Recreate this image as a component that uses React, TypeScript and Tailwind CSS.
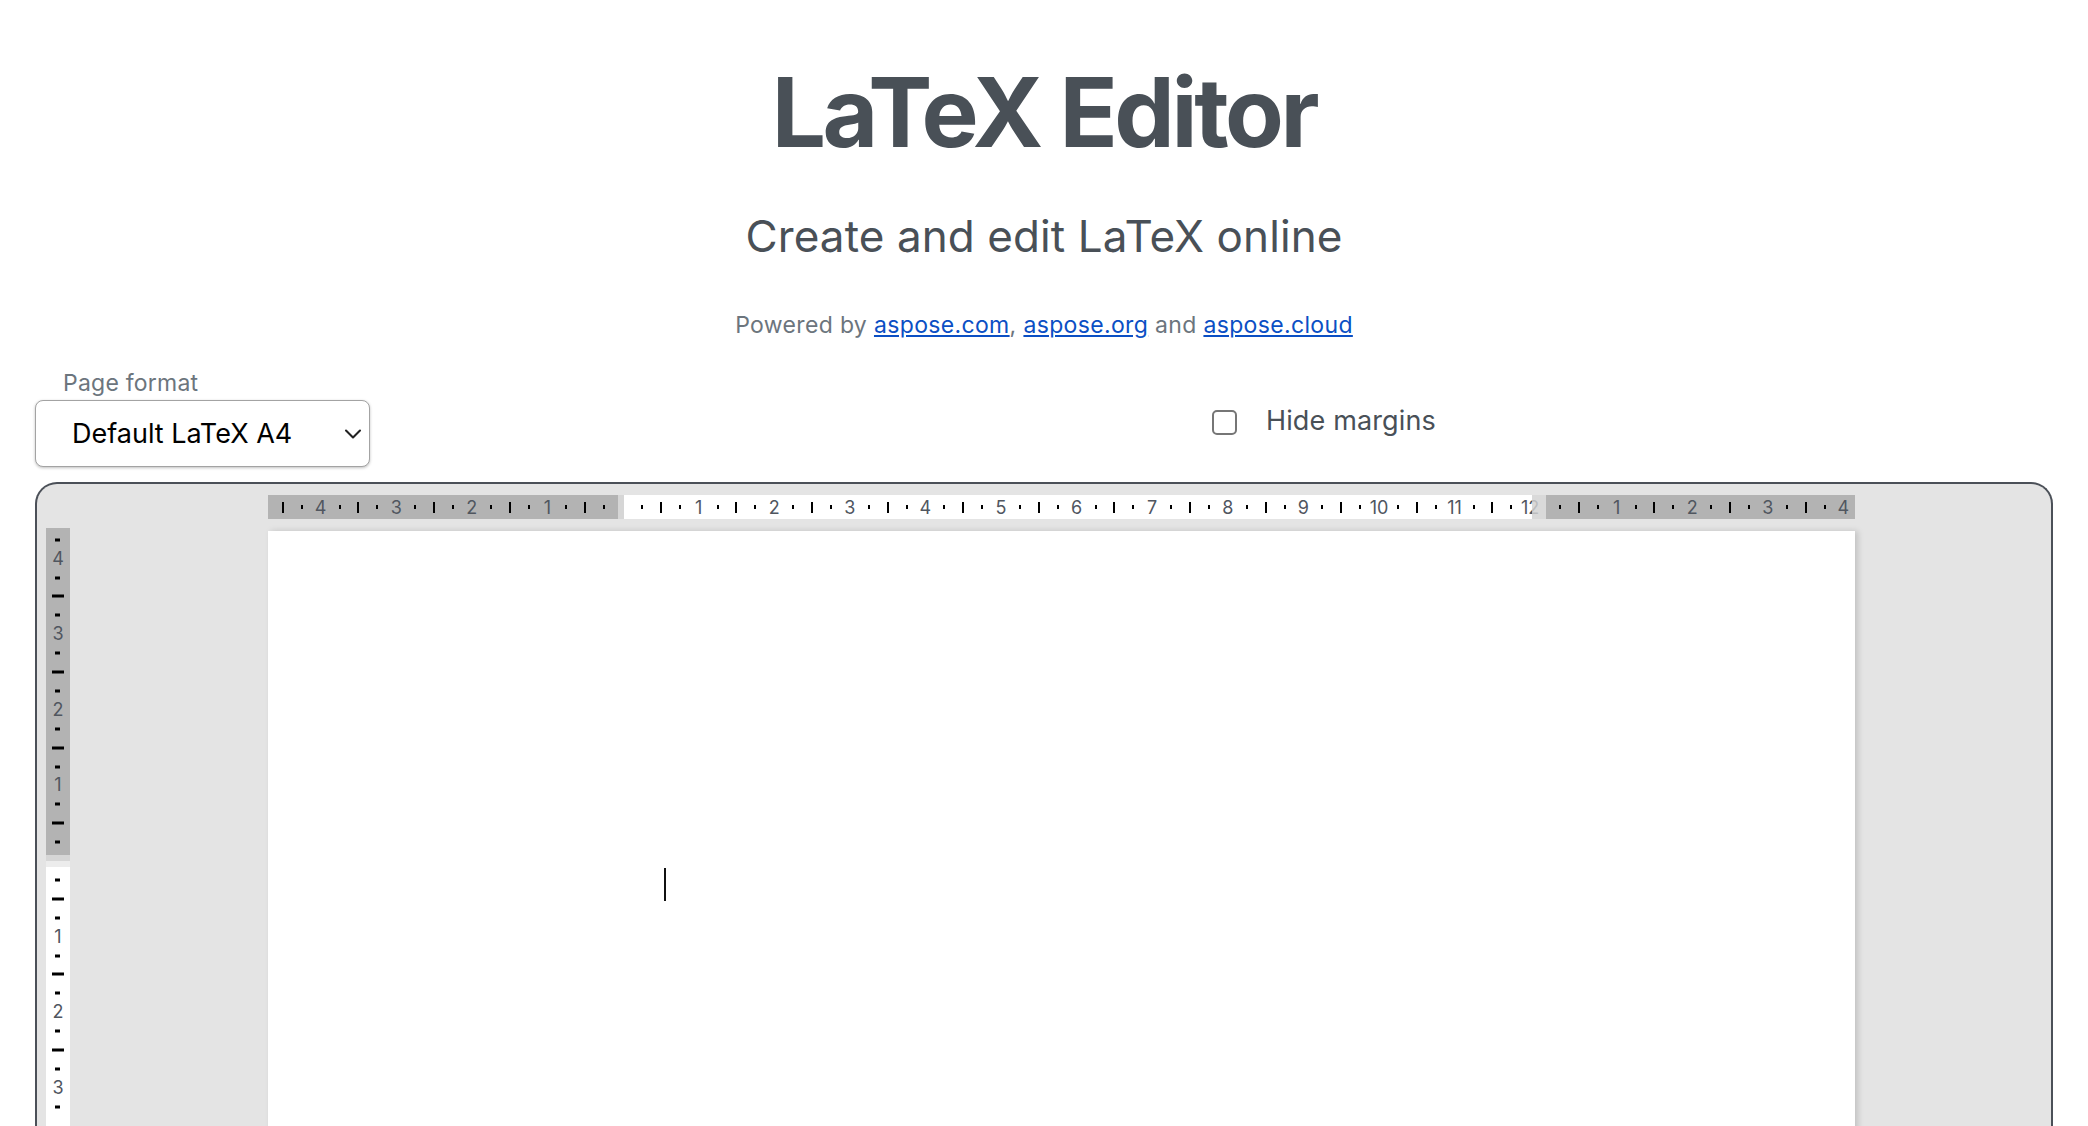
import React from 'react';
import { ChevronDown } from 'lucide-react';

// one quarter of a centimetre on the ruler, in px
const Q = 18.9;

type Mark = { pos: number; kind: 'small' | 'big' | 'label'; label?: number };

const makeMarks = (origin: number, dir: number, from: number, to: number): Mark[] => {
  const out: Mark[] = [];
  for (let k = from; k <= to; k++) {
    const pos = origin + dir * k * Q;
    if (k % 4 === 0) out.push({ pos, kind: 'label', label: k / 4 });
    else if (k % 4 === 2) out.push({ pos, kind: 'big' });
    else out.push({ pos, kind: 'small' });
  }
  return out;
};

const HSegment = ({ className, marks }: { className: string; marks: Mark[] }) => (
  <div className={`relative h-full ${className}`}>
    {marks.map((m, i) =>
      m.kind === 'label' ? (
        <span
          key={i}
          className="absolute top-[4px] -translate-x-1/2 text-[18px] leading-none text-[#50565f]"
          style={{ left: m.pos }}
        >
          {m.label}
        </span>
      ) : (
        <span
          key={i}
          className={
            m.kind === 'big'
              ? 'absolute top-[7px] h-[11px] w-[2px] -translate-x-1/2 bg-black'
              : 'absolute top-[10px] h-[4px] w-[2px] -translate-x-1/2 bg-black'
          }
          style={{ left: m.pos }}
        />
      )
    )}
  </div>
);

const VSegment = ({ className, marks }: { className: string; marks: Mark[] }) => (
  <div className={`relative w-full overflow-hidden ${className}`}>
    {marks.map((m, i) =>
      m.kind === 'label' ? (
        <span
          key={i}
          className="absolute left-0 right-0 -translate-y-1/2 text-center text-[18px] leading-none text-[#50565f]"
          style={{ top: m.pos }}
        >
          {m.label}
        </span>
      ) : (
        <span
          key={i}
          className={
            m.kind === 'big'
              ? 'absolute left-[6px] h-[3px] w-[12px] -translate-y-1/2 bg-black'
              : 'absolute left-[9px] h-[3px] w-[5px] -translate-y-1/2 bg-black'
          }
          style={{ top: m.pos }}
        />
      )
    )}
  </div>
);

const HorizontalRuler = () => (
  <div className="flex h-[24px] w-[1587px]">
    <HSegment className="w-[350px] bg-[#b3b3b3]" marks={makeMarks(355, -1, 1, 18)} />
    <div className="w-[6px] bg-[#d6d6d6]" />
    <HSegment className="w-[908px] bg-white" marks={makeMarks(-1, 1, 1, 48)} />
    <div className="relative z-10 w-[14px] bg-[#d6d6d6]/80" />
    <HSegment className="flex-1 bg-[#b3b3b3]" marks={makeMarks(-5, 1, 1, 16)} />
  </div>
);

const VerticalRuler = () => (
  <div className="flex w-[24px] flex-col">
    <VSegment className="h-[327px] bg-[#b3b3b3]" marks={makeMarks(333, -1, 1, 17)} />
    <div className="h-[6px] bg-[#d6d6d6]" />
    <div className="h-[6px] bg-[#ececec]" />
    <VSegment className="h-[400px] bg-white" marks={makeMarks(-6, 1, 1, 13)} />
  </div>
);

export default function App() {
  return (
    <div className="h-[1126px] overflow-hidden bg-white font-['Inter','Liberation_Sans',sans-serif]">
      <header className="pt-[64px] text-center">
        <h1 className="text-[96px] font-bold leading-none tracking-[-0.035em] text-[#495057]">LaTeX Editor</h1>
        <p className="mt-[54px] text-[44px] leading-none tracking-[0.002em] text-[#495057]">
          Create and edit LaTeX online
        </p>
        <p className="mt-[56px] text-[23px] leading-none tracking-[0.015em] text-[#6c757d]">
          Powered by{' '}
          <a href="#" className="text-[#0b4fc4] underline">aspose.com</a>,{' '}
          <a href="#" className="text-[#0b4fc4] underline">aspose.org</a> and{' '}
          <a href="#" className="text-[#0b4fc4] underline">aspose.cloud</a>
        </p>
      </header>

      <div className="mt-[35px] flex items-start px-[35px]">
        <div className="flex flex-col">
          <label className="ml-[28px] text-[23px] leading-none tracking-[0.01em] text-[#6c757d]">Page format</label>
          <div className="mt-[5px] flex h-[67px] w-[335px] items-center justify-between rounded-[8px] border border-[#a3a3a3] bg-white pl-[36px] pr-[2px] shadow-[0_1px_3px_rgba(0,0,0,0.25)]">
            <span className="text-[27px] leading-none text-black">Default LaTeX A4</span>
            <ChevronDown size={28} strokeWidth={1.8} className="text-[#222]" />
          </div>
        </div>

        <div className="ml-[842px] mt-[37px] flex items-center">
          <span className="h-[25px] w-[25px] rounded-[5px] border-2 border-[#767676] bg-white" />
          <span className="ml-[29px] -translate-y-[2px] text-[27px] leading-none tracking-[0.005em] text-[#495057]">
            Hide margins
          </span>
        </div>
      </div>

      <div className="mx-[35px] mt-[15px] h-[700px] rounded-t-[22px] border-2 border-b-0 border-[#4b5058] bg-[#e4e4e4]">
        <div className="pl-[231px] pt-[11px]">
          <HorizontalRuler />
        </div>
        <div className="mt-[9px] flex items-start pl-[9px]">
          <VerticalRuler />
          <div className="relative ml-[198px] mt-[3px] h-[700px] w-[1587px] bg-white shadow-[3px_0_6px_rgba(0,0,0,0.15)]">
            <span className="absolute left-[396px] top-[337px] h-[33px] w-[2px] bg-[#111]" />
          </div>
        </div>
      </div>
    </div>
  );
}
